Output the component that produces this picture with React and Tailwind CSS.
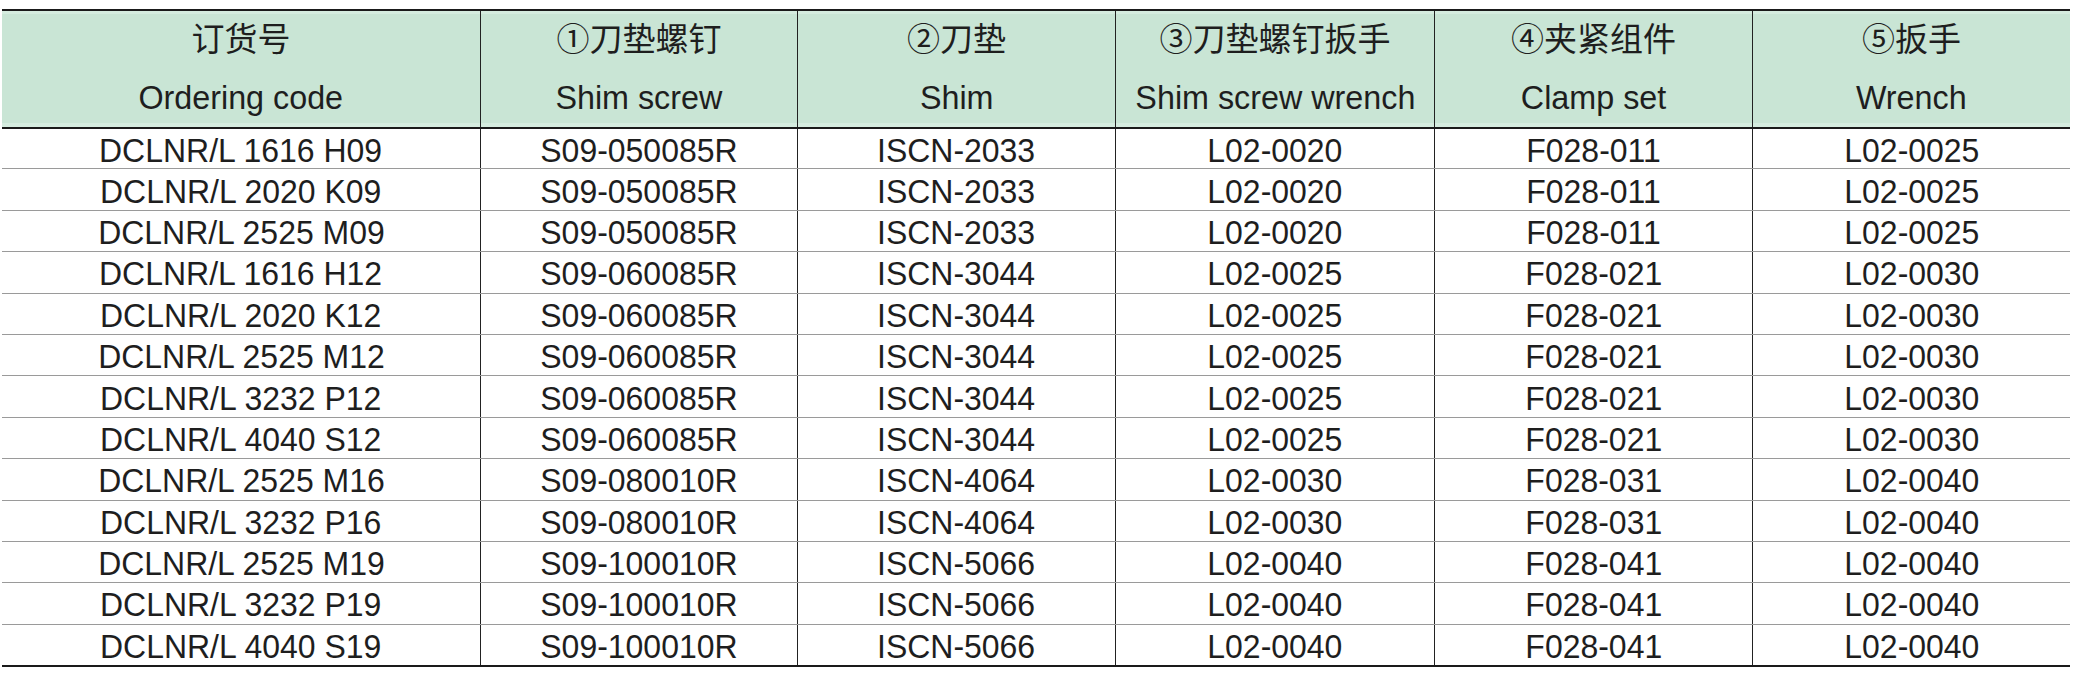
const headers = [
  ["订货号", "Ordering code"],
  ["①刀垫螺钉", "Shim screw"],
  ["②刀垫", "Shim"],
  ["③刀垫螺钉扳手", "Shim screw wrench"],
  ["④夹紧组件", "Clamp set"],
  ["⑤扳手", "Wrench"],
];

const parts = {
  9: ["S09-050085R", "ISCN-2033", "L02-0020", "F028-011", "L02-0025"],
  12: ["S09-060085R", "ISCN-3044", "L02-0025", "F028-021", "L02-0030"],
  16: ["S09-080010R", "ISCN-4064", "L02-0030", "F028-031", "L02-0040"],
  19: ["S09-100010R", "ISCN-5066", "L02-0040", "F028-041", "L02-0040"],
};

const rows = [
  ["DCLNR/L 1616 H09", 9],
  ["DCLNR/L 2020 K09", 9],
  ["DCLNR/L 2525 M09", 9],
  ["DCLNR/L 1616 H12", 12],
  ["DCLNR/L 2020 K12", 12],
  ["DCLNR/L 2525 M12", 12],
  ["DCLNR/L 3232 P12", 12],
  ["DCLNR/L 4040 S12", 12],
  ["DCLNR/L 2525 M16", 16],
  ["DCLNR/L 3232 P16", 16],
  ["DCLNR/L 2525 M19", 19],
  ["DCLNR/L 3232 P19", 19],
  ["DCLNR/L 4040 S19", 19],
].map(([code, size]) => [code, ...parts[size]]);

const cols = "grid grid-cols-[478px_317px_318px_319px_318px_318px]";

export default function App() {
  return (
    <div
      className="min-h-[675px] bg-white pt-[9px] text-[#1e1e1e]"
      style={{ fontFamily: '"Liberation Sans", "Noto Sans CJK SC", sans-serif' }}
    >
      <div className="ml-[2px] w-[2068px] border-t-2 border-[#1a1a1a]">
        {/* header */}
        <div className={`${cols} border-b-2 border-[#1a1a1a] bg-[#c9e5d5]`}>
          {headers.map(([zh, en], i) => (
            <div
              key={i}
              className={`flex h-[116px] flex-col items-center pt-[6px] shadow-[inset_0_3px_0_#d5ecdf,inset_0_-4px_0_#d5ecdf] ${
                i ? "border-l border-[#222]" : ""
              }`}
            >
              <div className="h-[46px] text-[33px] leading-[46px]">{zh}</div>
              <div className="mt-[11px] text-[34px] leading-[46px]">
                <span className="inline-block scale-x-95">{en}</span>
              </div>
            </div>
          ))}
        </div>

        {/* body */}
        {rows.map((row, r) => (
          <div
            key={r}
            className={`${cols} ${
              r === rows.length - 1
                ? "h-[42.4px] border-b-2 border-[#1a1a1a]"
                : r === 0
                  ? "h-[40.4px] border-b border-[#9a9a9a]"
                  : "h-[41.4px] border-b border-[#9a9a9a]"
            }`}
          >
            {row.map((cell, c) => (
              <div
                key={c}
                className={`flex items-center justify-center pt-[2px] text-[34px] leading-none ${
                  c ? "border-l border-[#222]" : ""
                }`}
              >
                <span className="inline-block scale-x-94">{cell}</span>
              </div>
            ))}
          </div>
        ))}
      </div>
    </div>
  );
}
